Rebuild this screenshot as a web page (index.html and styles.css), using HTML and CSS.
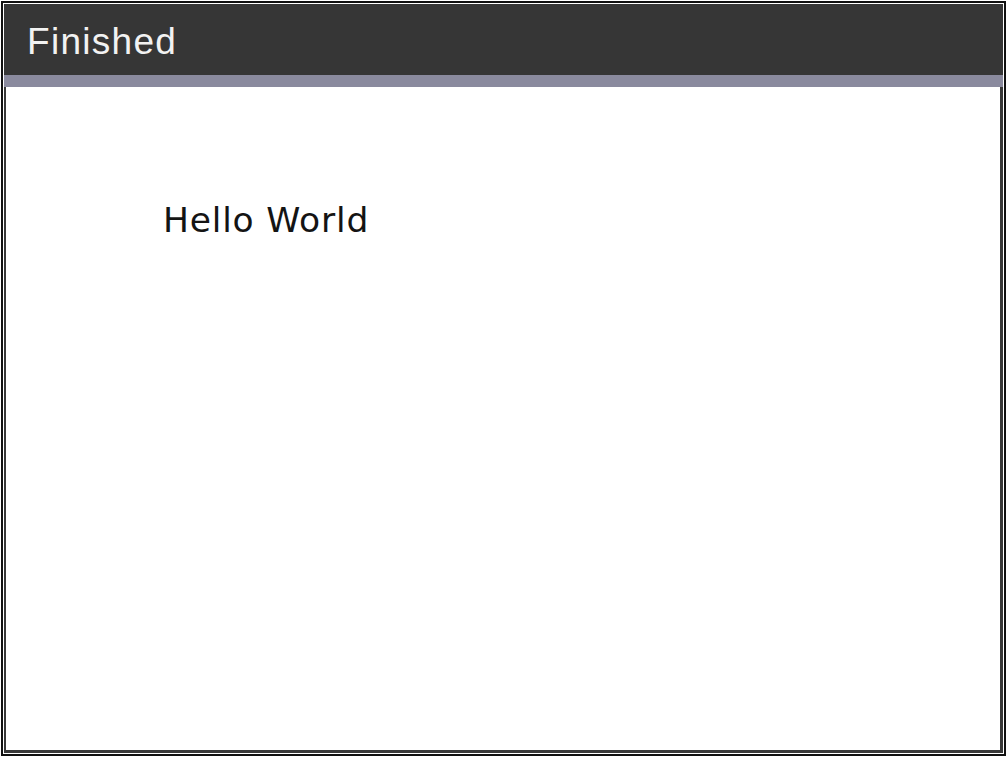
FILE: index.html
```html
<!DOCTYPE html>
<html>
<head>
<meta charset="utf-8">
<link rel="stylesheet" href="styles.css">
</head>
<body>
<div class="frame">
  <div class="screen">
    <div class="header"><span class="title">Finished</span></div>
    <div class="bar"></div>
    <div class="content">
      <div class="message">Hello World</div>
    </div>
  </div>
</div>
</body>
</html>
```
FILE: styles.css
```css
html, body {
  margin: 0;
  padding: 0;
  background: #ffffff;
}
body {
  width: 1007px;
  height: 757px;
  overflow: hidden;
  font-family: "Liberation Sans", Arial, sans-serif;
}
.frame {
  box-sizing: border-box;
  margin: 1px;
  width: 1005px;
  height: 755px;
  border: 2px solid #111111;
  padding: 1px;
  background: #ffffff;
}
.screen {
  display: flex;
  flex-direction: column;
  width: 999px;
  height: 749px;
}
.header {
  height: 71px;
  background: #363636;
  color: #f2f2f2;
  display: flex;
  align-items: center;
  padding-left: 23px;
  box-sizing: border-box;
}
.title {
  font-size: 37px;
  letter-spacing: 1.3px;
  line-height: 1;
  position: relative;
  top: 2px;
}
.bar {
  height: 12px;
  background: #8a8a9e;
}
.content {
  flex: 1;
  background: #ffffff;
  border-left: 2px solid #383838;
  border-right: 3px solid #383838;
  border-bottom: 3px solid #383838;
  padding: 116px 0 0 157px;
}
.message {
  font-family: "DejaVu Sans", "Liberation Sans", sans-serif;
  font-size: 34.5px;
  line-height: 1;
  letter-spacing: 0.8px;
  color: #141414;
}
```
